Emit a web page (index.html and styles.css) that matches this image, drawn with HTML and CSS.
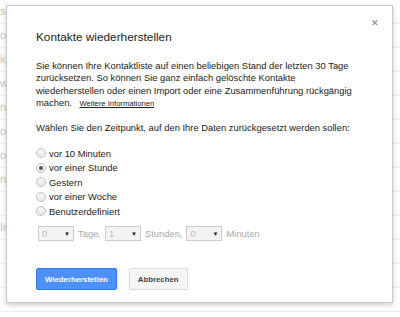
FILE: index.html
```html
<!DOCTYPE html>
<html lang="de">
<head>
  <meta charset="UTF-8" />
  <title>Kontakte wiederherstellen</title>
  <link rel="stylesheet" href="styles.css">
</head>
<body>

<div class="bg-list">
  <div class="bg-row">st</div>
  <div class="bg-row">o</div>
  <div class="bg-row">k</div>
  <div class="bg-row">w</div>
  <div class="bg-row">n</div>
  <div class="bg-row">or</div>
  <div class="bg-row">on</div>
  <div class="bg-row">nf</div>
  <div class="bg-row"></div>
  <div class="bg-row">In</div>
  <div class="bg-row"></div>
  <div class="bg-row"></div>
  <div class="bg-row"></div>
</div>

<!-- Dialog -->
<div class="dialog">
  <span class="close">&#x2715;</span>
  <div class="title">Kontakte wiederherstellen</div>

  <p class="intro">
    Sie können Ihre Kontaktliste auf einen beliebigen Stand der letzten 30 Tage
    zurücksetzen. So können Sie ganz einfach gelöschte Kontakte
    wiederherstellen oder einen Import oder eine Zusammenführung rückgängig
    machen. <a href="#" class="more">Weitere Informationen</a>
  </p>

  <p class="ask">Wählen Sie den Zeitpunkt, auf den Ihre Daten zurückgesetzt werden sollen:</p>

  <div class="options">
    <label><input type="radio" name="when" /> vor 10 Minuten</label>
    <label><input type="radio" name="when" checked /> vor einer Stunde</label>
    <label><input type="radio" name="when" /> Gestern</label>
    <label><input type="radio" name="when" /> vor einer Woche</label>
    <label><input type="radio" name="when" /> Benutzerdefiniert</label>
  </div>

  <div class="custom">
    <span class="sel">0<i>&#9660;</i></span> Tage,
    <span class="sel">1<i>&#9660;</i></span> Stunden,
    <span class="sel">0<i>&#9660;</i></span> Minuten
  </div>

  <div class="buttons">
    <button class="btn primary">Wiederherstellen</button>
    <button class="btn">Abbrechen</button>
  </div>
</div>

</body>
</html>
```

FILE: styles.css
```css
body {
  margin: 0;
  background: #fff;
  font-family: "Liberation Sans", Arial, sans-serif;
  overflow: hidden;
}

.bg-list {
  width: 100%;
}

.bg-row {
  height: 23px;
  line-height: 23px;
  border-bottom: 1px solid #ebebeb;
  font-size: 11px;
  color: #c8c8c8;
}

.dialog {
  position: absolute;
  left: 6px;
  top: 5px;
  width: 327px;
  height: 269px;
  padding: 14px 29px 13px 29px;
  background: #fff;
  border: 1px solid #c9c9c9;
  box-shadow: 0 2px 5px rgba(0,0,0,0.2);
  color: #222;
  font-size: 9.4px;
}

.close {
  position: absolute;
  right: 13px;
  top: 12px;
  font-size: 9px;
  color: #999;
  font-weight: bold;
}

.title {
  font-size: 11.8px;
  margin-top: 10px;
  color: #222;
}

.intro {
  margin: 16px 0 0;
  line-height: 12.4px;
}

.more {
  font-size: 7.6px;
  line-height: 0;
  color: #222;
  margin-left: 5px;
}

.ask {
  margin: 12px 0 0;
}

.options {
  display: flex;
  flex-direction: column;
  gap: 3px;
  margin-top: 15px;
}

.options label {
  display: flex;
  align-items: center;
  gap: 2px;
  height: 11.5px;
}

.options input {
  appearance: none;
  margin: 0 1px 0 0;
  width: 10px;
  height: 10px;
  border-radius: 50%;
  border: 1px solid #c4c4c4;
  background: radial-gradient(circle at 50% 35%, #f8f8f8 0, #e2e2e2 100%);
  box-sizing: border-box;
  display: grid;
  place-items: center;
}

.options input:checked::after {
  content: "";
  width: 4px;
  height: 4px;
  border-radius: 50%;
  background: #555;
}

.custom {
  display: flex;
  align-items: center;
  gap: 4px;
  margin-top: 9px;
  margin-left: 2px;
  color: #aaa;
}

.sel {
  display: inline-flex;
  justify-content: space-between;
  align-items: center;
  width: 28px;
  height: 13px;
  padding: 0 3px;
  border: 1px solid #ccc;
  background: #f3f3f3;
  color: #bbb;
}

.sel i {
  font-style: normal;
  font-size: 6px;
  color: #222;
}

.buttons {
  display: flex;
  gap: 12px;
  margin-top: 27px;
}

.btn {
  font-family: inherit;
  font-size: 7.8px;
  font-weight: bold;
  height: 22px;
  padding: 0 8px;
  border: 1px solid #dcdcdc;
  border-radius: 2px;
  background: #f5f5f5;
  color: #444;
}

.primary {
  background: #4d90fe;
  border-color: #3079ed;
  color: #fff;
}
```
